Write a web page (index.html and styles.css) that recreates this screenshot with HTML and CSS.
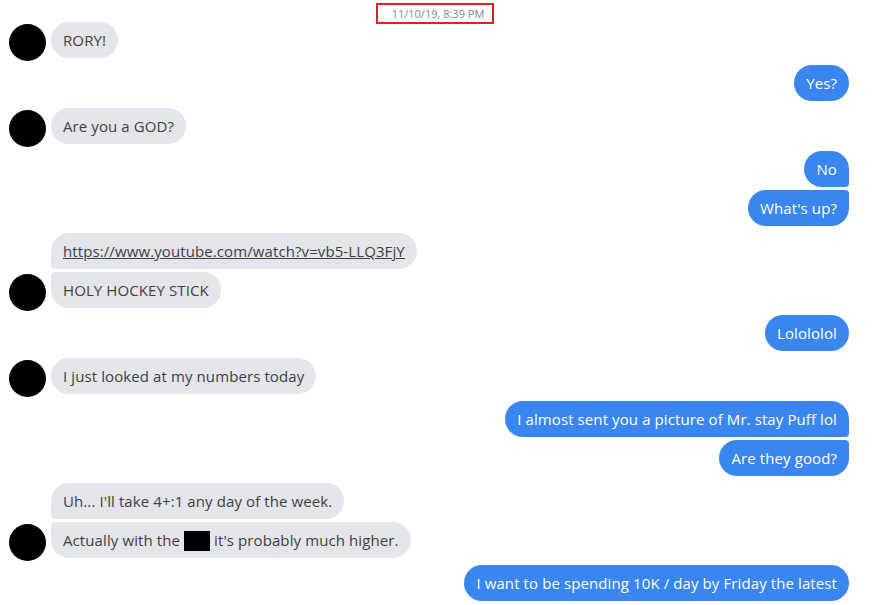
FILE: index.html
```html
<!DOCTYPE html>
<html>
<head>
<meta charset="utf-8">
<link rel="stylesheet" href="styles.css">
</head>
<body>
<div class="chat">
  <div class="stamp-row"><span class="stamp">11/10/19, 8:39 PM</span></div>

  <div class="group in">
    <div class="avatar"></div>
    <div class="bubbles"><div class="bubble">RORY!</div></div>
  </div>

  <div class="group out">
    <div class="bubbles"><div class="bubble">Yes?</div></div>
  </div>

  <div class="group in">
    <div class="avatar"></div>
    <div class="bubbles"><div class="bubble">Are you a GOD?</div></div>
  </div>

  <div class="group out">
    <div class="bubbles">
      <div class="bubble">No</div>
      <div class="bubble">What's up?</div>
    </div>
  </div>

  <div class="group in">
    <div class="avatar"></div>
    <div class="bubbles">
      <div class="bubble"><span class="link">https://www.youtube.com/watch?v=vb5-LLQ3FjY</span></div>
      <div class="bubble">HOLY HOCKEY STICK</div>
    </div>
  </div>

  <div class="group out">
    <div class="bubbles"><div class="bubble">Lolololol</div></div>
  </div>

  <div class="group in">
    <div class="avatar"></div>
    <div class="bubbles"><div class="bubble">I just looked at my numbers today</div></div>
  </div>

  <div class="group out">
    <div class="bubbles">
      <div class="bubble">I almost sent you a picture of Mr. stay Puff lol</div>
      <div class="bubble">Are they good?</div>
    </div>
  </div>

  <div class="group in">
    <div class="avatar"></div>
    <div class="bubbles">
      <div class="bubble">Uh... I'll take 4+:1 any day of the week.</div>
      <div class="bubble">Actually with the <span class="redact"></span> it's probably much higher.</div>
    </div>
  </div>

  <div class="group out">
    <div class="bubbles"><div class="bubble">I want to be spending 10K / day by Friday the latest</div></div>
  </div>
</div>
</body>
</html>
```

FILE: styles.css
```css
html, body {
  margin: 0;
  padding: 0;
  background: #ffffff;
}
body {
  font-family: "Open Sans", "Noto Sans", sans-serif;
  font-size: 15px;
}
.chat {
  display: flex;
  flex-direction: column;
  gap: 7px;
  padding: 3px 23px 0 9px;
}
.stamp-row {
  display: flex;
  justify-content: center;
  height: 12px;
  padding-left: 12px;
}
.stamp {
  display: block;
  height: 17px;
  padding: 0 8px 0 14px;
  border: 2px solid #e01f26;
  font-size: 11px;
  line-height: 17px;
  color: #858585;
  background: #fff;
  position: relative;
  z-index: 1;
}
.group {
  display: flex;
  align-items: flex-end;
  gap: 5px;
}
.group.out {
  justify-content: flex-end;
}
.avatar {
  width: 37px;
  height: 37px;
  border-radius: 50%;
  background: #000;
  flex: none;
  margin-bottom: -3px;
}
.bubbles {
  display: flex;
  flex-direction: column;
  gap: 3px;
}
.group.out .bubbles {
  align-items: flex-end;
}
.group.in .bubbles {
  align-items: flex-start;
}
.bubble {
  height: 36px;
  line-height: 36px;
  padding: 0 12px;
  border-radius: 18px;
  white-space: nowrap;
  box-sizing: border-box;
  letter-spacing: 0.1px;
}
.group.in .bubble {
  background: #e4e6eb;
  color: #3e3f40;
}
.group.out .bubble {
  background: #3a86f1;
  color: #ffffff;
}
.group.in .bubble:not(:last-child) {
  border-bottom-left-radius: 4px;
}
.group.in .bubble:not(:first-child) {
  border-top-left-radius: 4px;
}
.group.out .bubble:not(:last-child) {
  border-bottom-right-radius: 4px;
}
.group.out .bubble:not(:first-child) {
  border-top-right-radius: 4px;
}
.link {
  text-decoration: underline;
}
.redact {
  display: inline-block;
  width: 26px;
  height: 20px;
  background: #000;
  vertical-align: -5px;
}
```
